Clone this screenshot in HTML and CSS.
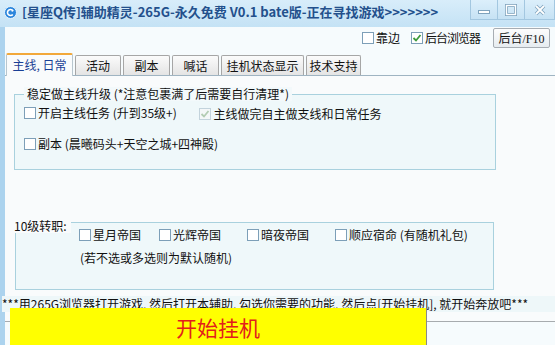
FILE: index.html
```html
<html>
<head>
  <title>辅助精灵</title>
  <link rel="stylesheet" href="styles.css">
</head>
<body>
  <div class="window">
    <div class="titlebar">
      <svg class="app-icon" width="13" height="13" viewBox="0 0 13 13">
        <circle cx="6.5" cy="6.5" r="6" fill="#2c86dc" stroke="#e8f4fc" stroke-width="1"/>
        <path d="M8.8 4.6 A3 3 0 1 0 8.8 8.4" fill="none" stroke="#fff" stroke-width="1.6"/>
        <path d="M7.6 3.2 L10 4.8 L7.8 6" fill="#fff"/>
      </svg>
      <span class="title">[星座Q传]辅助精灵-265G-永久免费 V0.1 bate版-正在寻找游戏&gt;&gt;&gt;&gt;&gt;&gt;&gt;</span>
      <div class="controls">
        <span class="ctl">
          <svg width="14" height="10" viewBox="0 0 14 10"><rect x="1.5" y="5.5" width="11" height="3" fill="#fff" stroke="#7fa3bd"/></svg>
        </span>
        <span class="ctl">
          <svg width="14" height="12" viewBox="0 0 14 12"><rect x="2.5" y="1.5" width="9" height="9" fill="none" stroke="#7fa3bd" stroke-width="3"/><rect x="2.5" y="1.5" width="9" height="9" fill="none" stroke="#fff" stroke-width="1.4"/></svg>
        </span>
        <span class="ctl close">
          <svg width="14" height="12" viewBox="0 0 14 12"><path d="M3 2 L11 10 M11 2 L3 10" stroke="#7fa3bd" stroke-width="3.4"/><path d="M3 2 L11 10 M11 2 L3 10" stroke="#fff" stroke-width="1.8"/></svg>
        </span>
      </div>
    </div>

    <div class="client">
      <div class="toolbar">
        <label class="check"><span class="box"></span>靠边</label>
        <label class="check"><span class="box"><svg width="10" height="10" viewBox="0 0 10 10"><path d="M1.5 5 L4 7.5 L8.5 2" fill="none" stroke="#3b9a3b" stroke-width="1.8"/></svg></span>后台浏览器</label>
        <button class="btn">后台<span class="mono">/F10</span></button>
      </div>

      <div class="tabs">
        <span class="tab active" style="width:67px">主线, 日常</span>
        <span class="tab" style="width:46px">活动</span>
        <span class="tab" style="width:47px">副本</span>
        <span class="tab" style="width:47px">喊话</span>
        <span class="tab" style="width:83px">挂机状态显示</span>
        <span class="tab" style="width:55px">技术支持</span>
      </div>

      <div class="panel">
        <div class="group g1">
          <span class="caption">稳定做主线升级 (*注意包裹满了后需要自行清理*)</span>
          <div class="row">
            <label class="check"><span class="box"></span>开启主线任务 (升到35级+)</label>
            <label class="check disabled"><span class="box"><svg width="10" height="10" viewBox="0 0 10 10"><path d="M1.5 5 L4 7.5 L8.5 2" fill="none" stroke="#b3ccb3" stroke-width="1.8"/></svg></span>主线做完自主做支线和日常任务</label>
          </div>
          <div class="row second">
            <label class="check"><span class="box"></span>副本 (晨曦码头+天空之城+四神殿)</label>
          </div>
        </div>

        <div class="group g2">
          <span class="caption">10级转职:</span>
          <div class="jobs">
            <label class="check"><span class="box"></span>星月帝国</label>
            <label class="check"><span class="box"></span>光辉帝国</label>
            <label class="check"><span class="box"></span>暗夜帝国</label>
            <label class="check"><span class="box"></span>顺应宿命 (有随机礼包)</label>
          </div>
          <div class="hint">(若不选或多选则为默认随机)</div>
        </div>

        <div class="notice">***用265G浏览器打开游戏, 然后打开本辅助, 勾选你需要的功能, 然后点[开始挂机], 就开始奔放吧***</div>
      </div>

      <button class="start">开始挂机</button>
    </div>
  </div>
</body>
</html>
```

FILE: styles.css
```css
body {
  margin: 0;
  width: 555px;
  height: 345px;
  overflow: hidden;
  font-family: "Noto Sans CJK SC", sans-serif;
  font-size: 12px;
  line-height: 16px;
  color: #111;
}

.window {
  display: flex;
  flex-direction: column;
  width: 555px;
  height: 345px;
  background: #acd3ee;
}

/* title bar */
.titlebar {
  height: 27px;
  display: flex;
  align-items: flex-start;
  background: linear-gradient(#d8edfa, #c4e2f5);
  position: relative;
}

.app-icon {
  margin: 6px 0 0 4px;
}

.title {
  margin: 3px 0 0 5px;
  font-size: 13px;
  line-height: 18px;
  font-weight: bold;
  color: #23508c;
  white-space: nowrap;
}

.controls {
  display: flex;
  margin-left: auto;
}

.ctl {
  width: 28px;
  height: 20px;
  display: flex;
  align-items: center;
  justify-content: center;
  border: 1px solid #a3c7e0;
  border-top: none;
  margin-left: -1px;
  background: linear-gradient(#dcefFb, #c6e2f4);
  box-sizing: border-box;
}

.ctl.close {
  width: 31px;
}

/* client area */
.client {
  flex: 1;
  margin-left: 5px;
  background: #f6fbfd;
  position: relative;
}

.toolbar {
  height: 27px;
  box-sizing: border-box;
  padding: 1px 5px 0 0;
  display: flex;
  justify-content: flex-end;
  align-items: flex-start;
}

.toolbar .check {
  line-height: 20px;
  margin-right: 11px;
}

.toolbar .check + .check {
  margin-right: 13px;
  letter-spacing: -1px;
}

.check {
  display: inline-flex;
  align-items: center;
  white-space: nowrap;
}

.box {
  width: 12px;
  height: 12px;
  box-sizing: border-box;
  border: 1px solid #7d9fb8;
  background: #fff;
  margin-right: 2px;
  display: inline-flex;
  align-items: center;
  justify-content: center;
}

.disabled .box {
  border-color: #c3d3dc;
  background: #f4f7f8;
}

.btn {
  width: 57px;
  height: 20px;
  padding: 0;
  border: 1px solid #a7adb3;
  border-radius: 2px;
  background: linear-gradient(#fdfdfd, #e6ecf0);
  font-family: "Noto Sans CJK SC", sans-serif;
  font-size: 12px;
  line-height: 18px;
  color: #111;
}

.mono {
  font-family: "Liberation Serif", serif;
  font-size: 12px;
}

/* tabs */
.tabs {
  height: 21px;
  display: flex;
  align-items: flex-end;
  padding-left: 1px;
  position: relative;
  z-index: 1;
}

.tab {
  height: 20px;
  box-sizing: border-box;
  margin-right: 2px;
  border: 1px solid #a6a6a6;
  border-bottom: none;
  border-radius: 2px 2px 0 0;
  background: linear-gradient(#fbfbfb, #e4e4e4);
  text-align: center;
  font-size: 12px;
  line-height: 19px;
  color: #111;
}

.tab.active {
  height: 23px;
  margin-bottom: -1px;
  border-color: #b8c6ce;
  border-top: 2px solid #f2a83a;
  background: #f9fbfc;
  color: #1a3f95;
  line-height: 20px;
}

/* tab page */
.panel {
  border-top: 1px solid #9fb4c2;
  border-bottom: 1px solid #a7abae;
  background: #f9fbfc;
  padding: 18px 0 9px;
}

.group {
  position: relative;
  border: 1px solid #a9d1de;
  background: #eff8fa;
}

.caption {
  position: absolute;
  background: #f3f9fb;
  padding: 0 3px;
  line-height: 14px;
  white-space: nowrap;
}

.g1 {
  margin-left: 9px;
  width: 482px;
  box-sizing: border-box;
  padding: 10px 0 17px 9px;
}

.g1 .caption {
  top: -8px;
  left: 9px;
}

.row .check + .check {
  margin-left: 20px;
}

.row.second {
  margin-top: 14px;
}

.g2 {
  margin: 52px 0 0 10px;
  width: 479px;
  box-sizing: border-box;
  padding: 4px 0 23px 63px;
}

.g2 .caption {
  top: -4px;
  left: -2px;
  padding: 0 4px 0 0;
  background: #f9fbfc;
}

.jobs {
  display: grid;
  grid-template-columns: 80px 88px 88px auto;
}

.hint {
  margin: 7px 0 0 1px;
}

.notice {
  margin: 6px 0 0 -3px;
  background: #eef7f9;
  white-space: nowrap;
}

/* big start button */
.start {
  position: absolute;
  left: 5px;
  top: 281px;
  width: 417px;
  height: 37px;
  padding: 0;
  border: none;
  border-right: 1px solid #8a8a8a;
  background: #ffff00;
  font-family: "Noto Sans CJK SC", sans-serif;
  font-size: 21px;
  line-height: 36px;
  color: #e3201b;
  text-align: center;
}
```
